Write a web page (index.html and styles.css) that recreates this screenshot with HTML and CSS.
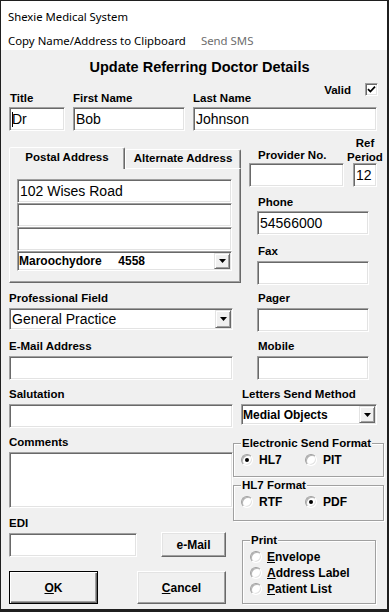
FILE: index.html
```html
<!DOCTYPE html>
<html lang="en">
<head>
<meta charset="utf-8">
<title>Shexie Medical System</title>
<link rel="stylesheet" href="styles.css">
</head>
<body>
<div class="window">
  <div class="titlebar">Shexie Medical System</div>
  <div class="menubar">
    <span class="menu-item">Copy Name/Address to Clipboard</span>
    <span class="menu-item disabled">Send SMS</span>
  </div>
  <div class="client">
    <div class="heading">Update Referring Doctor Details</div>

    <div class="names">
      <div class="field f-title">
        <div class="label">Title</div>
        <div class="edit"><span class="caret"></span>Dr</div>
      </div>
      <div class="field f-first">
        <div class="label">First Name</div>
        <div class="edit">Bob</div>
      </div>
      <div class="field f-last">
        <div class="last-head">
          <div class="label last-label">Last Name</div>
          <div class="valid">
            <span class="label">Valid</span>
            <span class="checkbox"><svg width="9" height="9" viewBox="0 0 9 9"><path d="M1 4.2 L3.4 6.6 L8 1.6" fill="none" stroke="#000" stroke-width="1.7"/></svg></span>
          </div>
        </div>
        <div class="edit">Johnson</div>
      </div>
    </div>

    <div class="upper">
      <div class="tabs">
        <div class="tabstrip">
          <div class="tab active">Postal Address</div>
          <div class="tab">Alternate Address</div>
        </div>
        <div class="tabpanel">
          <div class="edit addr">102 Wises Road</div>
          <div class="edit addr"></div>
          <div class="edit addr"></div>
          <div class="combo addr-combo">
            <span class="combo-text bold">Maroochydore     4558</span>
            <span class="drop"><svg width="7" height="4" viewBox="0 0 7 4"><polygon points="0,0 7,0 3.5,4" fill="#000"/></svg></span>
          </div>
        </div>
      </div>

      <div class="rtop">
        <div class="ref-row">
          <div class="field f-provider">
            <div class="label provider-label">Provider No.</div>
            <div class="edit"></div>
          </div>
          <div class="field f-ref">
            <div class="label ref-label">Ref<br>Period</div>
            <div class="edit ref-edit">12</div>
          </div>
        </div>
        <div class="field f-right f-phone">
          <div class="label">Phone</div>
          <div class="edit">54566000</div>
        </div>
        <div class="field f-right f-fax">
          <div class="label">Fax</div>
          <div class="edit"></div>
        </div>
      </div>
    </div>

    <div class="lower">
      <div class="field">
        <div class="label">Professional Field</div>
        <div class="combo prof-combo">
          <span class="combo-text">General Practice</span>
          <span class="drop"><svg width="7" height="4" viewBox="0 0 7 4"><polygon points="0,0 7,0 3.5,4" fill="#000"/></svg></span>
        </div>
      </div>
      <div class="field f-right">
        <div class="label">Pager</div>
        <div class="edit"></div>
      </div>

      <div class="field">
        <div class="label">E-Mail Address</div>
        <div class="edit"></div>
      </div>
      <div class="field f-right">
        <div class="label">Mobile</div>
        <div class="edit"></div>
      </div>

      <div class="field">
        <div class="label">Salutation</div>
        <div class="edit"></div>
      </div>
      <div class="field f-letters">
        <div class="label">Letters Send Method</div>
        <div class="combo letters-combo">
          <span class="combo-text bold">Medial Objects</span>
          <span class="drop"><svg width="7" height="4" viewBox="0 0 7 4"><polygon points="0,0 7,0 3.5,4" fill="#000"/></svg></span>
        </div>
      </div>

      <div class="left-bottom">
        <div class="label">Comments</div>
        <div class="edit multi"></div>
        <div class="label edi-label">EDI</div>
        <div class="edi-row">
          <div class="edit edi-edit"></div>
          <div class="btn email-btn">e-Mail</div>
        </div>
        <div class="btn-row">
          <div class="btn default ok-btn"><u>O</u>K</div>
          <div class="btn cancel-btn"><u>C</u>ancel</div>
        </div>
      </div>

      <div class="right-bottom">
        <fieldset class="group g-elec">
          <legend>Electronic Send Format</legend>
          <div class="radio-row">
            <span class="opt"><span class="radio on"></span>HL7</span>
            <span class="opt"><span class="radio"></span>PIT</span>
          </div>
        </fieldset>
        <fieldset class="group g-hl7">
          <legend>HL7 Format</legend>
          <div class="radio-row">
            <span class="opt"><span class="radio"></span>RTF</span>
            <span class="opt"><span class="radio on"></span>PDF</span>
          </div>
        </fieldset>
        <fieldset class="group g-print">
          <legend>Print</legend>
          <div class="opt print-opt"><span class="radio"></span><span><u>E</u>nvelope</span></div>
          <div class="opt print-opt"><span class="radio"></span><span><u>A</u>ddress Label</span></div>
          <div class="opt print-opt"><span class="radio"></span><span><u>P</u>atient List</span></div>
        </fieldset>
      </div>
    </div>
  </div>
</div>
</body>
</html>
```

FILE: styles.css
```css
* { box-sizing: border-box; }

html, body {
  margin: 0;
  padding: 0;
}

body {
  width: 389px;
  height: 612px;
  overflow: hidden;
  background: #f0f0f0;
  color: #000;
  font-family: "Liberation Sans", Arial, sans-serif;
}

.window {
  width: 389px;
  height: 612px;
  border-style: solid;
  border-color: #1f1f1f;
  border-width: 1px 2px 3px 1px;
  display: flex;
  flex-direction: column;
  background: #f0f0f0;
}

.titlebar {
  height: 31px;
  background: #fff;
  font-family: "Noto Sans", sans-serif;
  font-size: 11.3px;
  line-height: 31px;
  padding-left: 7px;
  white-space: nowrap;
}

.menubar {
  height: 18px;
  background: #fff;
  font-family: "Noto Sans", sans-serif;
  font-size: 11.4px;
  line-height: 18px;
  padding-left: 7px;
  display: flex;
  gap: 15px;
  white-space: nowrap;
}

.menu-item.disabled { color: #6d6d6d; }

.client {
  flex: 1;
  padding-left: 8px;
}

.heading {
  margin-top: 8px;
  padding-left: 3px;
  font-size: 14.5px;
  line-height: 18px;
  font-weight: bold;
  text-align: center;
}

/* generic */
.label {
  font-size: 11.5px;
  font-weight: bold;
  line-height: 15px;
  margin-bottom: 1px;
  white-space: nowrap;
}

.bold { font-weight: bold; font-size: 12px; }

.field { display: flex; flex-direction: column; }

.edit {
  height: 24px;
  background: #fff;
  border: 1px solid;
  border-color: #a0a0a0 #fff #fff #a0a0a0;
  box-shadow: inset 1px 1px 0 #696969, inset -1px -1px 0 #e3e3e3;
  font-size: 14px;
  line-height: 22px;
  padding: 0 2px;
  white-space: nowrap;
  overflow: hidden;
}

.caret {
  display: inline-block;
  width: 1px;
  height: 15px;
  background: #000;
  vertical-align: -3px;
  margin-right: -1px;
}

.checkbox {
  width: 13px;
  height: 13px;
  background: #fff;
  border: 1px solid;
  border-color: #a0a0a0 #fff #fff #a0a0a0;
  box-shadow: inset 1px 1px 0 #696969, inset -1px -1px 0 #e3e3e3;
  display: flex;
  align-items: center;
  justify-content: center;
  flex: none;
}

.combo {
  display: flex;
  background: #fff;
  border: 1px solid;
  border-color: #a0a0a0 #fff #fff #a0a0a0;
  box-shadow: inset 1px 1px 0 #696969, inset -1px -1px 0 #e3e3e3;
  white-space: pre;
  overflow: hidden;
}

.combo-text {
  flex: 1;
  padding-left: 2px;
  font-size: 14px;
  align-self: center;
}

.combo-text.bold { font-size: 12px; padding-left: 1px; }

.drop {
  width: 16px;
  flex: none;
  margin: 1px 1px 1px 0;
  background: #f0f0f0;
  border: 1px solid;
  border-color: #e3e3e3 #696969 #696969 #e3e3e3;
  box-shadow: inset 1px 1px 0 #fff, inset -1px -1px 0 #a0a0a0;
  display: flex;
  align-items: center;
  justify-content: center;
}

.btn {
  background: #f0f0f0;
  border: 1px solid;
  border-color: #fff #696969 #696969 #fff;
  box-shadow: inset -1px -1px 0 #a0a0a0, inset 1px 1px 0 #e3e3e3;
  font-size: 12px;
  font-weight: bold;
  display: flex;
  align-items: center;
  justify-content: center;
}

.btn.default {
  border-color: #000;
  box-shadow: inset 1px 1px 0 #fff, inset -1px -1px 0 #696969, inset -2px -2px 0 #a0a0a0;
}

/* names row */
.names {
  display: flex;
  gap: 8px;
  margin-top: 7px;
  align-items: flex-end;
}

.f-title { width: 56px; }
.f-title .label { padding-left: 1px; }
.f-first { width: 112px; }
.f-last { width: 184px; }

.last-head {
  display: flex;
  justify-content: space-between;
  align-items: flex-start;
}

.last-label { margin-top: 8px; }

.valid {
  display: flex;
  align-items: flex-start;
  gap: 14px;
  margin-right: -1px;
}

.valid .label { margin-bottom: 0; }

/* upper section */
.upper {
  display: grid;
  grid-template-columns: 224px 154px;
  margin-top: 5px;
}

.tabs {
  width: 232px;
  margin-top: 11px;
}

.tabstrip {
  display: flex;
  align-items: flex-end;
  height: 21px;
}

.tab {
  width: 116px;
  height: 19px;
  border: 1px solid;
  border-bottom: none;
  border-color: #fff #696969 transparent #fff;
  border-radius: 2px 2px 0 0;
  box-shadow: inset -1px 0 0 #a0a0a0;
  font-size: 11.5px;
  font-weight: bold;
  line-height: 16px;
  text-align: center;
  white-space: nowrap;
}

.tab.active {
  height: 22px;
  margin-bottom: -1px;
  line-height: 18px;
  position: relative;
  z-index: 1;
  background: #f0f0f0;
}

.tabpanel {
  height: 115px;
  border: 1px solid;
  border-color: #fff #696969 #696969 #fff;
  box-shadow: inset -1px -1px 0 #a0a0a0;
  padding: 10px 0 0 7px;
}

.addr { width: 215px; }

.addr-combo {
  width: 215px;
  height: 20px;
}

.ref-row {
  display: flex;
  align-items: flex-end;
}

.f-provider {
  margin-left: 16px;
  width: 95px;
}

.provider-label {
  padding-left: 9px;
  margin-bottom: 0;
}

.f-ref {
  margin-left: 3px;
  width: 36px;
}

.ref-label {
  line-height: 14px;
  text-align: center;
  margin-bottom: -1px;
}

.ref-edit {
  width: 24px;
  margin-left: 6px;
}

.f-right {
  margin-left: 24px;
  width: 112px;
}

.f-right .label { padding-left: 1px; }

.f-phone { margin-top: 8px; }
.f-fax { margin-top: 9px; }
.f-fax .edit { margin-top: 1px; }

/* lower section */
.lower {
  display: grid;
  grid-template-columns: 224px 154px;
  row-gap: 7px;
  margin-top: 6px;
}

.lower .label { margin-bottom: 2px; }

.prof-combo { height: 22px; }

.f-letters { margin-left: 8px; width: 136px; }
.f-letters .label { padding-left: 1px; }
.letters-combo { height: 21px; }

.left-bottom {
  display: flex;
  flex-direction: column;
}

.multi { height: 56px; }

.lower .edi-label {
  margin-top: 8px;
  margin-bottom: 1px;
}

.edi-row {
  display: flex;
  align-items: flex-start;
}

.edi-edit {
  width: 128px;
  margin-top: 1px;
}

.email-btn {
  width: 65px;
  height: 25px;
  margin-left: 24px;
}

.btn-row {
  display: flex;
  margin-top: 14px;
}

.ok-btn, .cancel-btn {
  width: 89px;
  height: 33px;
}

.cancel-btn { margin-left: 39px; }

/* groups */
.right-bottom {
  display: flex;
  flex-direction: column;
}

.group {
  margin: 0;
  min-width: 0;
  border: 1px solid #a0a0a0;
  box-shadow: inset 1px 1px 0 #fff, 1px 1px 0 #fff;
  padding: 2px 0 9px 7px;
}

.group legend {
  padding: 0 1px;
  font-size: 11.5px;
  font-weight: bold;
  line-height: 15px;
  background: #f0f0f0;
  white-space: nowrap;
}

.g-elec {
  width: 151px;
  margin-top: 1px;
}

.g-hl7 {
  width: 151px;
  margin-top: 1px;
  padding-bottom: 11px;
}

.g-print {
  width: 134px;
  margin: 12px 0 0 9px;
  padding: 1px 0 6px 7px;
}

.radio-row {
  display: grid;
  grid-template-columns: 64px auto;
  height: 14px;
}

.opt {
  display: flex;
  align-items: center;
  gap: 6px;
  font-size: 12px;
  font-weight: bold;
  white-space: nowrap;
}

.print-opt {
  height: 16px;
  gap: 5px;
}

.radio {
  width: 12px;
  height: 12px;
  flex: none;
  border-radius: 50%;
  background: #fff;
  border: 1px solid;
  border-color: #a0a0a0 #fff #fff #a0a0a0;
  box-shadow: inset 1px 1px 0 #b4b4b4, inset -1px -1px 0 #e3e3e3;
  position: relative;
}

.radio.on::after {
  content: "";
  position: absolute;
  left: 3px;
  top: 3px;
  width: 4px;
  height: 4px;
  border-radius: 50%;
  background: #000;
}
```
